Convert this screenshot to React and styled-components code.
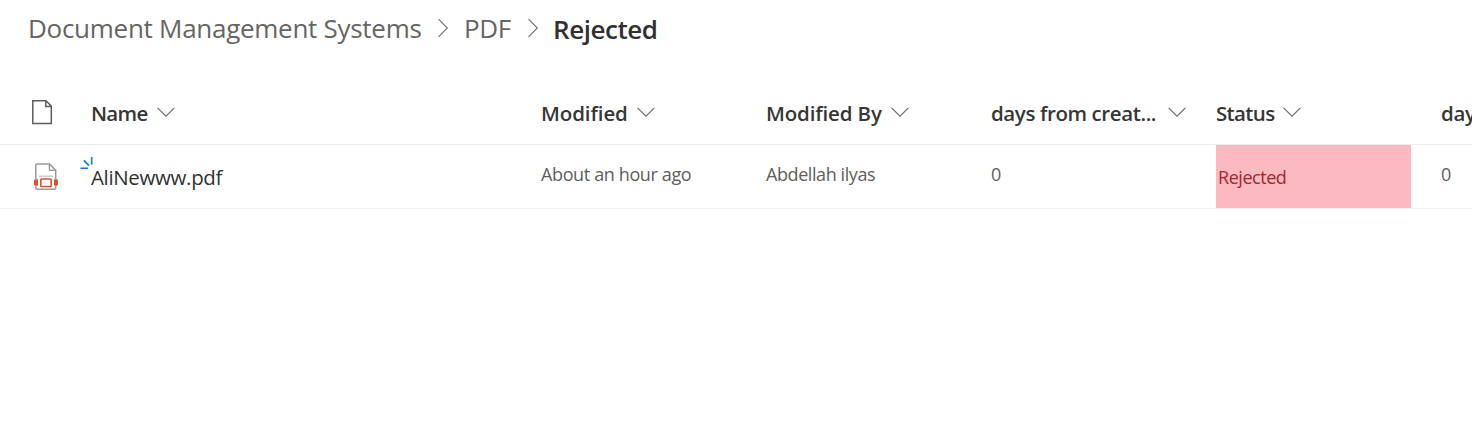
import React from 'react';
import styled, { createGlobalStyle } from 'styled-components';

const Global = createGlobalStyle`
  * { box-sizing: border-box; }
  body { margin: 0; background: #fff; overflow: hidden; font-family: "Open Sans", "Noto Sans", sans-serif; }
`;

const Page = styled.main`
  height: 443px;
  overflow: hidden;
  background: #fff;
`;

const Breadcrumb = styled.nav`
  display: flex;
  align-items: center;
  height: 80px;
  padding: 0 0 24px 28px;
  white-space: nowrap;
`;

const Crumb = styled.span`
  width: ${(p) => p.$width}px;
  padding-top: ${(p) => (p.$current ? 2 : 0)}px;
  font-size: 26px;
  line-height: 36px;
  letter-spacing: ${(p) => p.$spacing || 0}px;
  font-weight: ${(p) => (p.$current ? 600 : 400)};
  color: ${(p) => (p.$current ? '#323130' : '#666563')};
`;

const CrumbArrow = styled.svg`
  flex: none;
  width: 12px;
  height: 20px;
  margin: 0 ${(p) => p.$after}px 0 ${(p) => p.$before}px;
  fill: none;
  stroke: #74726f;
  stroke-width: 1.1;
`;

const Row = styled.div`
  display: grid;
  grid-template-columns: 91px 450px 225px 225px 225px 225px 225px;
  height: ${(p) => p.$height}px;
  border-bottom: 1px solid ${(p) => p.$line};
`;

const HeaderCell = styled.div`
  display: flex;
  align-items: center;
  padding-top: 2px;
  white-space: nowrap;
`;

const HeaderText = styled.span`
  width: ${(p) => p.$width}px;
  font-size: 20.5px;
  line-height: 28px;
  font-weight: 600;
  letter-spacing: ${(p) => p.$spacing || 0}px;
  color: #373635;
`;

const Chevron = styled.svg`
  flex: none;
  width: 18px;
  height: 10px;
  margin: 0 0 3px ${(p) => p.$gap}px;
  fill: none;
  stroke: #6b6967;
  stroke-width: 1.1;
`;

const IconCell = styled.div`
  display: flex;
  padding: ${(p) => p.$top}px 0 0 ${(p) => p.$left}px;
`;

const Icon = styled.svg`
  width: ${(p) => p.$w}px;
  height: ${(p) => p.$h}px;
  fill: none;
`;

const NameCell = styled.div`
  position: relative;
  padding-top: 18px;
  font-size: 20.5px;
  line-height: 28px;
  letter-spacing: -0.35px;
  color: #323130;
`;

const NewMark = styled.svg`
  position: absolute;
  left: -11px;
  top: 11px;
  width: 14px;
  height: 14px;
  stroke: #0f7ad8;
  stroke-width: 1.6;
`;

const Cell = styled.div`
  padding-top: 16px;
  font-size: 18px;
  line-height: 26px;
  letter-spacing: ${(p) => p.$spacing || 0}px;
  color: #605e5c;
  white-space: nowrap;
`;

const StatusCell = styled(Cell)`
  width: 195px;
  padding: 19px 0 0 2px;
  background: #fbbac2;
  color: #a4262c;
`;

const Arrow = ({ before, after }) => (
  <CrumbArrow viewBox="0 0 12 20" $before={before} $after={after}>
    <path d="M1.5 1.2 10.3 10 1.5 18.8" />
  </CrumbArrow>
);

const Heading = ({ children, width, spacing, gap = 9, arrow = true }) => (
  <HeaderCell>
    <HeaderText $width={width} $spacing={spacing}>{children}</HeaderText>
    {arrow && (
      <Chevron viewBox="0 0 18 10" $gap={gap}>
        <path d="M.6 .8 9 9.2 17.4 .8" />
      </Chevron>
    )}
  </HeaderCell>
);

export default function App() {
  return (
    <Page>
      <Global />
      <Breadcrumb>
        <Crumb $width={393} $spacing={-0.28}>Document Management Systems</Crumb>
        <Arrow before={16} after={15} />
        <Crumb $width={47} $spacing={-0.4}>PDF</Crumb>
        <Arrow before={16} after={14} />
        <Crumb $width={106} $spacing={-0.45} $current>Rejected</Crumb>
      </Breadcrumb>
      <Row $height={65} $line="#eaeaea">
        <IconCell $top={20} $left={32}>
          <Icon $w={21} $h={25} viewBox="0 0 21 25">
            <path d="M.8 .8H14L19.3 6.1V23.4H.8ZM13.7 1V6.4H19" stroke="#605e5c" strokeWidth="1.5" />
          </Icon>
        </IconCell>
        <Heading width={57} spacing={-0.7}>Name</Heading>
        <Heading width={87} spacing={-0.1}>Modified</Heading>
        <Heading width={116} spacing={-0.15}>Modified By</Heading>
        <Heading width={165} gap={12} spacing={-0.4}>days from creat...</Heading>
        <Heading width={59} gap={8} spacing={-0.65}>Status</Heading>
        <Heading width={180} arrow={false} spacing={-0.3}>days to expire</Heading>
      </Row>
      <Row $height={64} $line="#f1f1f1">
        <IconCell $top={18} $left={34}>
          <Icon $w={24} $h={28} viewBox="0 0 24 28">
            <path d="M1.8 16V2.2Q1.8 .9 3.1 .9H15.4L21.7 7.2V16M21.7 23V25Q21.7 26.3 20.4 26.3H3.1Q1.8 26.3 1.8 25V23" stroke="#999" strokeWidth="1.5" />
            <path d="M15.4 1V7.3H21.6" stroke="#999" strokeWidth="1.3" />
            <path d="M5 13.2H19" stroke="#c8c6c4" strokeWidth="1.3" />
            <rect x="6.8" y="16" width="10.4" height="7.5" rx=".8" stroke="#d65532" strokeWidth="1.7" />
            <path d="M1.2 16.3H4V22.7H1.2Q0 22.7 0 21.5V17.5Q0 16.3 1.2 16.3ZM20 16.3H22.8Q24 16.3 24 17.5V21.5Q24 22.7 22.8 22.7H20Z" fill="#d65532" />
          </Icon>
        </IconCell>
        <NameCell>
          <NewMark viewBox="0 0 14 14">
            <path d="M.5 12.3H8M3.8 4.4 9 9.6M11.7 1V8.5" />
          </NewMark>
          AliNewww.pdf
        </NameCell>
        <Cell $spacing={-0.37}>About an hour ago</Cell>
        <Cell $spacing={-0.42}>Abdellah ilyas</Cell>
        <Cell>0</Cell>
        <StatusCell $spacing={-0.45}>Rejected</StatusCell>
        <Cell>0</Cell>
      </Row>
    </Page>
  );
}
